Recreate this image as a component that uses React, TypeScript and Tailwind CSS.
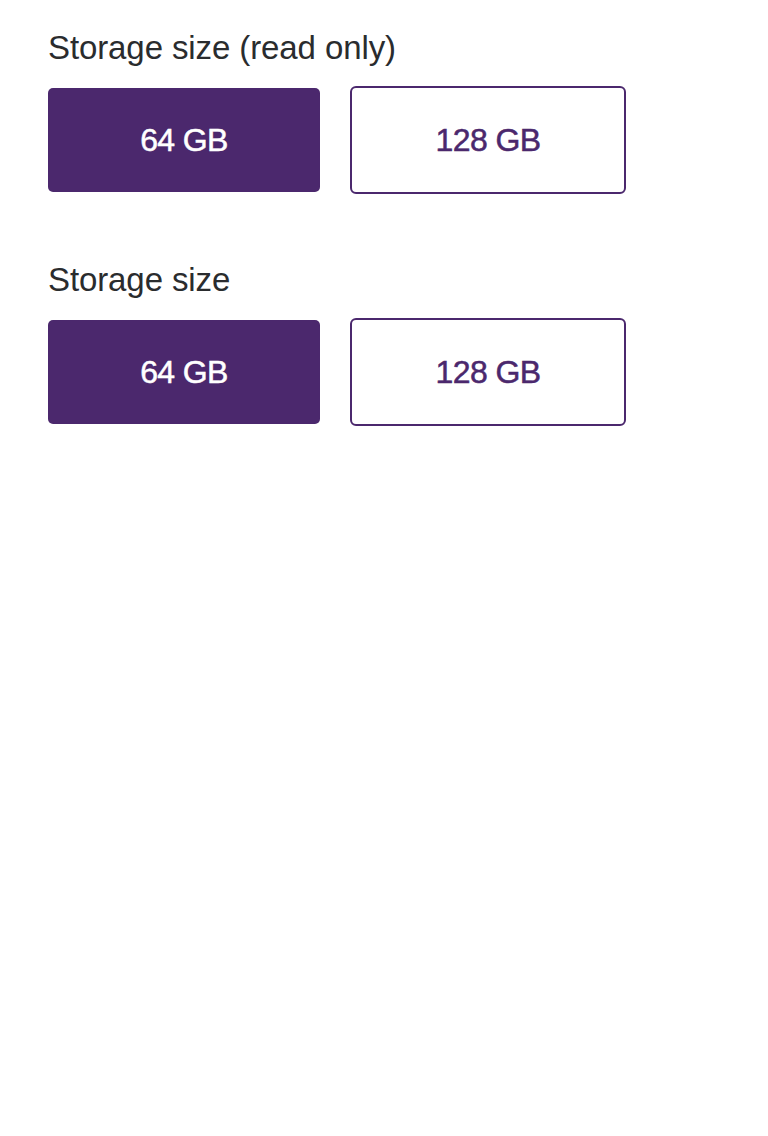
export default function App() {
  const Section = ({ title }: { title: string }) => (
    <div className="flex flex-col">
      <h2 className="text-[33px] leading-[36px] tracking-[-0.1px] text-[#2a2c2e]">{title}</h2>
      <div className="mt-[20px] flex items-start gap-[30px]">
        <div className="mt-[2px] flex h-[104px] w-[272px] items-center justify-center rounded-[5px] bg-[#4b286d] text-[32px] tracking-[-0.6px] text-white [-webkit-text-stroke:0.5px_currentColor]">
          64 GB
        </div>
        <div className="flex h-[108px] w-[276px] items-center justify-center rounded-[6px] border-2 border-[#4b286d] bg-white text-[32px] tracking-[-0.6px] text-[#4b286d] [-webkit-text-stroke:0.5px_currentColor]">
          128 GB
        </div>
      </div>
    </div>
  );
  return (
    <div className="min-h-[1136px] bg-white px-[48px] pt-[30px]" style={{ fontFamily: '"Liberation Sans", Arial, sans-serif' }}>
      <div className="flex flex-col gap-[68px]">
        <Section title="Storage size (read only)" />
        <Section title="Storage size" />
      </div>
    </div>
  );
}
